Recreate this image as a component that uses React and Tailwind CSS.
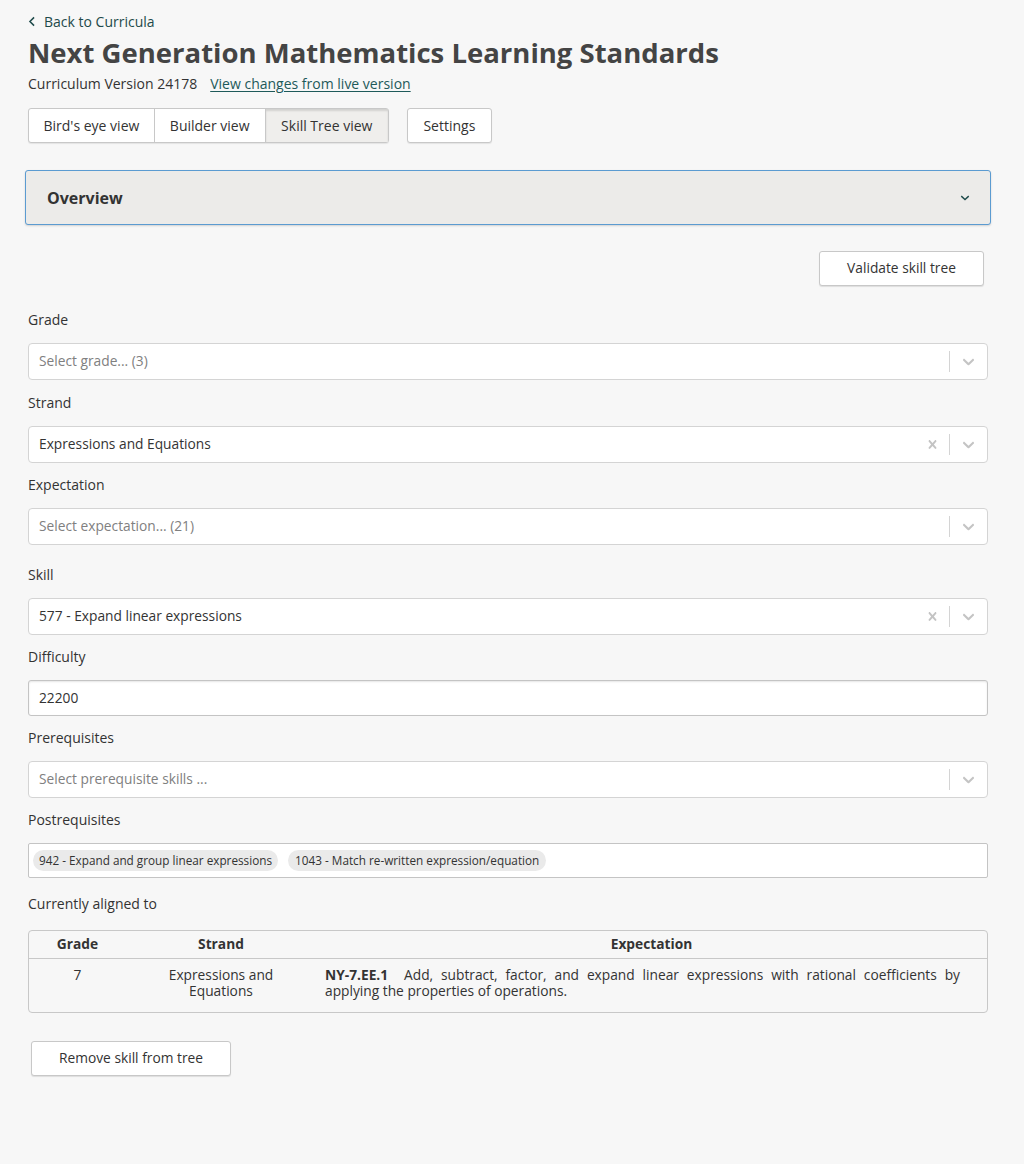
import React from 'react';

const Chevron = ({ className = '' }) => (
  <svg viewBox="0 0 20 20" className={className} fill="currentColor">
    <path d="M4.516 7.548c.436-.446 1.043-.481 1.576 0L10 11.295l3.908-3.747c.533-.481 1.141-.446 1.574 0 .436.445.408 1.197 0 1.615-.406.418-4.695 4.502-4.695 4.502a1.095 1.095 0 0 1-1.576 0S4.924 9.581 4.516 9.163c-.409-.418-.436-1.17 0-1.615z" />
  </svg>
);

const Cross = ({ className = '' }) => (
  <svg viewBox="0 0 20 20" className={className} fill="currentColor">
    <path d="M14.348 14.849c-.469.469-1.229.469-1.697 0L10 11.819l-2.651 3.029c-.469.469-1.229.469-1.697 0-.469-.469-.469-1.229 0-1.697l2.758-3.150-2.759-3.152c-.469-.469-.469-1.228 0-1.697.469-.469 1.228-.469 1.697 0L10 8.183l2.651-3.031c.469-.469 1.228-.469 1.697 0 .469.469.469 1.229 0 1.697l-2.758 3.152 2.758 3.150c.469.469.469 1.229 0 1.698z" />
  </svg>
);

const Select = ({ value, placeholder, clearable }) => (
  <div className="flex h-[37px] items-center rounded-[4px] border border-[#d4d4d4] bg-white">
    <div className={`flex-1 pl-[10px] text-[13.75px] ${value ? 'text-[#333]' : 'text-[#808080]'}`}>
      {value || placeholder}
    </div>
    {clearable && <Cross className="mr-[8px] h-[17px] w-[17px] text-[#c4c4c4]" />}
    <span className="h-[21px] w-px bg-[#d4d4d4]" />
    <Chevron className="mx-[9px] h-[19px] w-[19px] text-[#c4c4c4]" />
  </div>
);

const Label = ({ children, className = '' }) => (
  <div className={`mb-[13px] text-[14px] leading-[20px] text-[#333] ${className}`}>{children}</div>
);

export default function App() {
  return (
    <div className="min-h-[1164px] bg-[#f7f7f7] pl-[28px] pr-[36px] pt-[11px] text-[#333]" style={{ fontFamily: '"Open Sans", sans-serif' }}>
      <a className="flex items-center gap-[8px] text-[14px] text-[#1e4a4a]">
        <svg viewBox="0 0 10 16" className="h-[11px] w-[8px]" fill="none" stroke="currentColor" strokeWidth="2.2">
          <path d="M8 2 2 8l6 6" />
        </svg>
        Back to Curricula
      </a>
      <h1 className="mt-[3px] text-[27.5px] font-bold leading-[36px] text-[#444]">Next Generation Mathematics Learning Standards</h1>
      <div className="mt-[3px] flex items-center text-[14px] leading-[20px]">
        <span>Curriculum Version 24178</span>
        <a className="ml-[13px] text-[#1e5a5a] underline underline-offset-2">View changes from live version</a>
      </div>

      <div className="mt-[14px] flex">
        <div className="flex rounded-[3px] border border-[#c8c8c8] bg-white text-[14px] shadow-[0_1px_1px_rgba(0,0,0,0.08)]">
          <button className="h-[33px] border-r border-[#c8c8c8] px-[14.5px]">Bird's eye view</button>
          <button className="h-[33px] border-r border-[#c8c8c8] px-[15px]">Builder view</button>
          <button className="h-[33px] bg-[#efeeec] px-[15.5px] shadow-[inset_0_2px_2px_rgba(0,0,0,0.12)]">Skill Tree view</button>
        </div>
        <button className="ml-[18px] h-[35px] rounded-[3px] border border-[#c8c8c8] bg-white px-[15.5px] text-[14px] shadow-[0_1px_1px_rgba(0,0,0,0.08)]">Settings</button>
      </div>

      <div className="-mx-[3px] mt-[27px] flex h-[55px] items-center justify-between rounded-[3px] border border-[#5b9bd1] bg-[#ecebe9] pl-[21px] pr-[20px] shadow-[0_1px_2px_rgba(0,0,0,0.15)]">
        <span className="text-[16px] font-bold text-[#333]">Overview</span>
        <svg viewBox="0 0 12 8" className="h-[6px] w-[10px] text-[#1e4a4a]" fill="none" stroke="currentColor" strokeWidth="1.8">
          <path d="M1 1.5 6 6l5-4.5" />
        </svg>
      </div>

      <div className="mt-[26px] flex justify-end">
        <button className="mr-[4px] h-[35px] w-[165px] rounded-[3px] border border-[#c8c8c8] bg-white text-[13.75px] shadow-[0_1px_1px_rgba(0,0,0,0.1)]">Validate skill tree</button>
      </div>

      <div className="mt-[24px]">
        <Label>Grade</Label>
        <Select placeholder="Select grade... (3)" />
        <Label className="mt-[13px]">Strand</Label>
        <Select value="Expressions and Equations" clearable />
        <Label className="mt-[12px]">Expectation</Label>
        <Select placeholder="Select expectation... (21)" />
        <Label className="mt-[20px]">Skill</Label>
        <Select value="577 - Expand linear expressions" clearable />
        <Label className="mt-[12px]">Difficulty</Label>
        <div className="flex h-[36px] items-center rounded-[3px] border border-[#c4c4c4] bg-white pl-[10px] text-[13.75px] shadow-[inset_0_1px_2px_rgba(0,0,0,0.1)]">22200</div>
        <Label className="mt-[12px]">Prerequisites</Label>
        <Select placeholder="Select prerequisite skills ..." />
        <Label className="mt-[12px]">Postrequisites</Label>
        <div className="flex h-[35px] items-center gap-[10px] rounded-[2px] border border-[#c4c4c4] bg-white px-[4px] text-[11.75px]">
          <span className="rounded-full bg-[#eaeaea] px-[6px] py-[2px]">942 - Expand and group linear expressions</span>
          <span className="rounded-full bg-[#eaeaea] px-[7px] py-[2px]">1043 - Match re-written expression/equation</span>
        </div>
        <Label className="mt-[16px]">Currently aligned to</Label>
      </div>

      <div className="mt-[16px] overflow-hidden rounded-[4px] border border-[#c8c8c8] text-[13.75px]">
        <div className="flex h-[28px] items-center border-b border-[#c8c8c8] font-bold">
          <div className="w-[97px] text-center">Grade</div>
          <div className="w-[190px] text-center">Strand</div>
          <div className="flex-1 text-center">Expectation</div>
        </div>
        <div className="flex pb-[13px] pt-[8px] leading-[16px]">
          <div className="w-[97px] text-center">7</div>
          <div className="w-[190px] text-center">Expressions and<br />Equations</div>
          <div className="flex-1 pl-[9px] pr-[27px] text-justify">
            <b className="mr-[8px]">NY-7.EE.1</b> Add, subtract, factor, and expand linear expressions with rational coefficients by applying the properties of operations.
          </div>
        </div>
      </div>

      <button className="ml-[3px] mt-[28px] h-[35px] w-[200px] rounded-[3px] border border-[#c8c8c8] bg-white text-[13.75px] shadow-[0_1px_1px_rgba(0,0,0,0.1)]">Remove skill from tree</button>
    </div>
  );
}
